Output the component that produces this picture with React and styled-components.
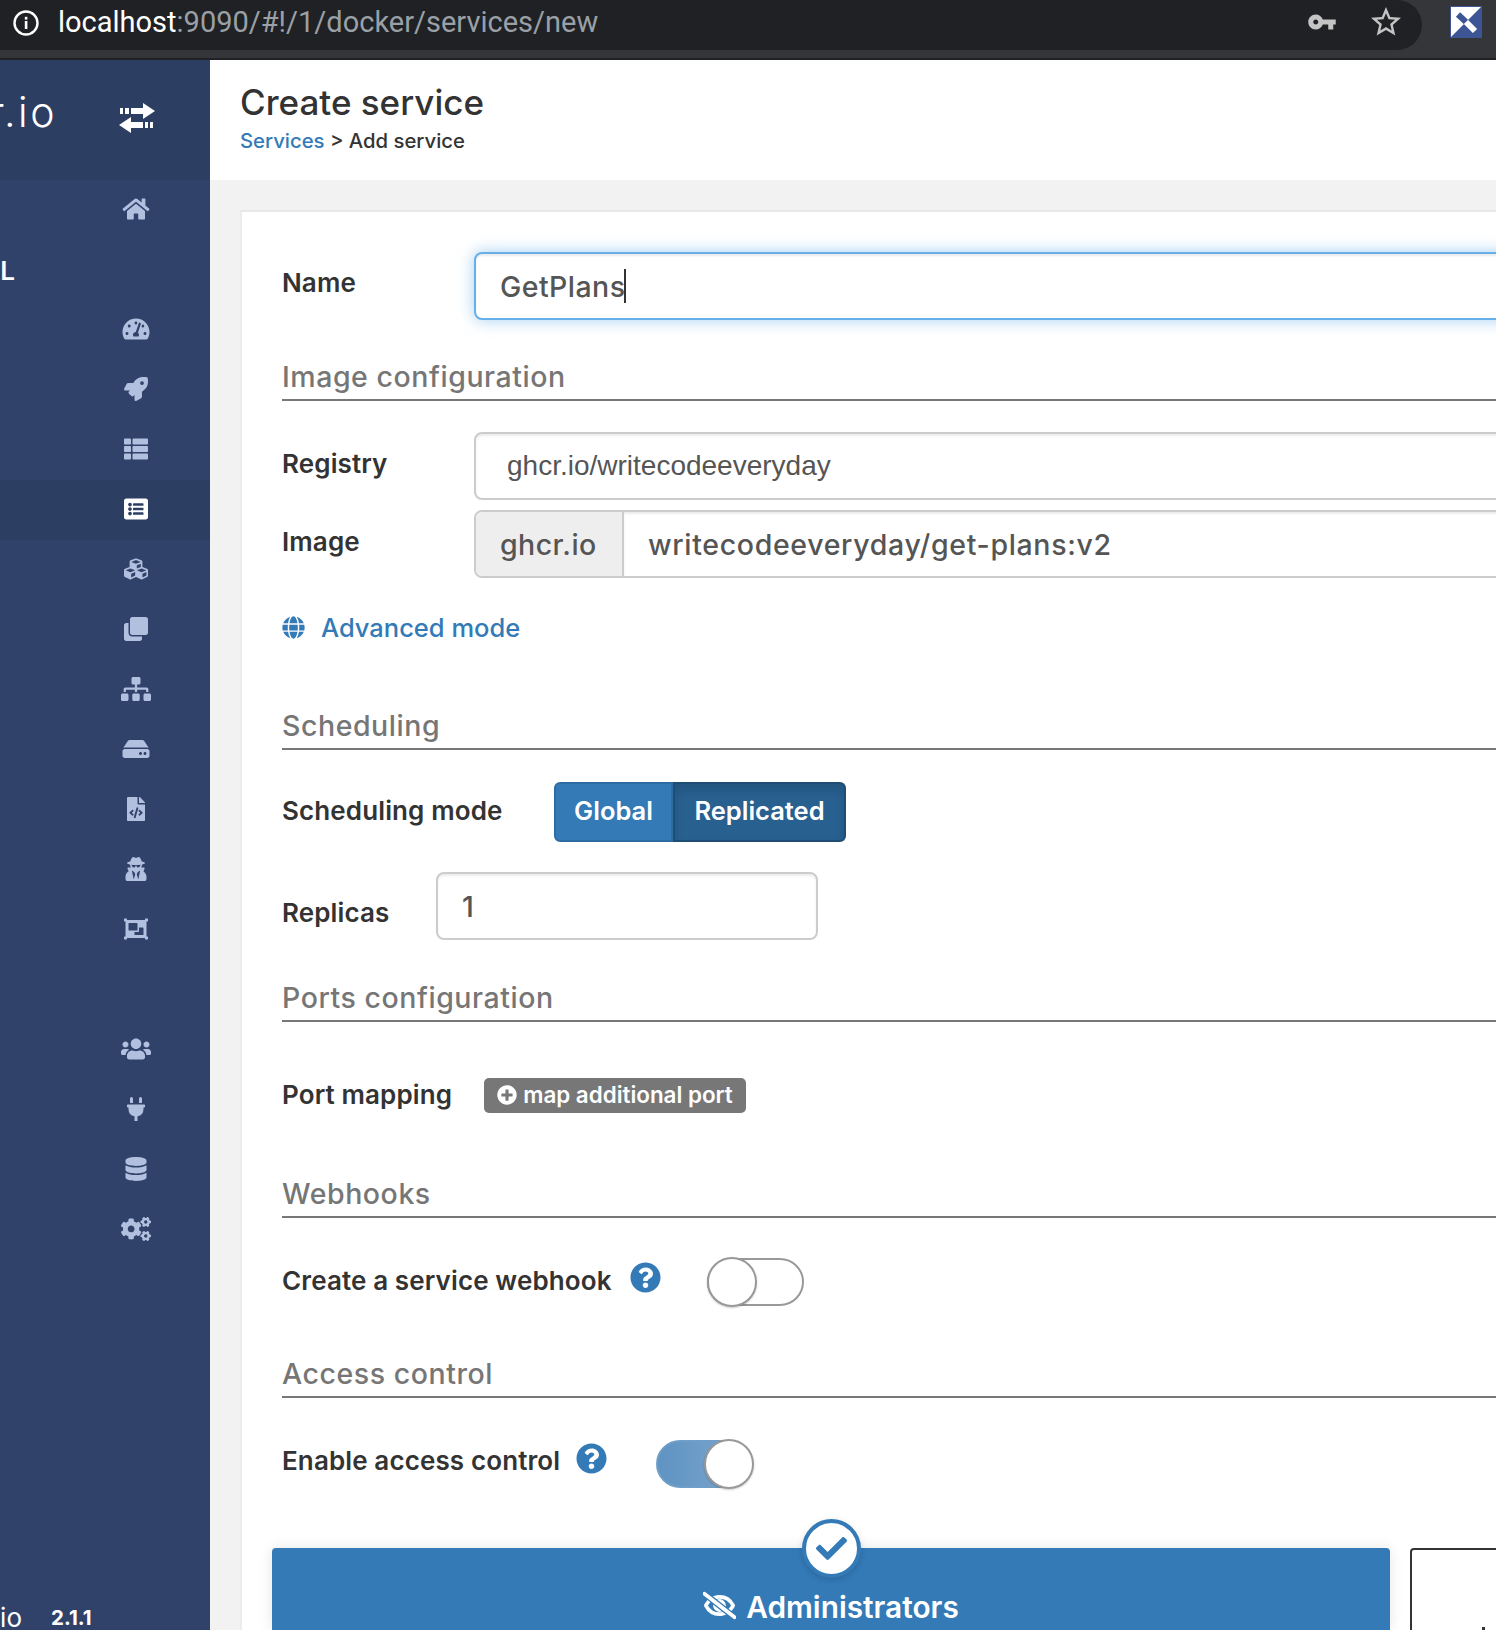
import React from "react";
import styled, { createGlobalStyle } from "styled-components";
import {
  FaHome,
  FaTachometerAlt,
  FaRocket,
  FaThList,
  FaListAlt,
  FaCubes,
  FaClone,
  FaSitemap,
  FaHdd,
  FaFileCode,
  FaUserSecret,
  FaObjectGroup,
  FaUsers,
  FaPlug,
  FaDatabase,
  FaCogs,
  FaGlobe,
  FaQuestionCircle,
  FaPlusCircle,
  FaCheck,
  FaRegEyeSlash,
} from "react-icons/fa";

const GlobalStyle = createGlobalStyle`
  html, body {
    margin: 0;
    padding: 0;
    background: #fff;
  }
  * {
    box-sizing: border-box;
  }
`;

const fontStack = `Inter, "Noto Sans", sans-serif`;

const Page = styled.div`
  width: 1496px;
  height: 1630px;
  overflow: hidden;
  display: flex;
  flex-direction: column;
  font-family: ${fontStack};
  color: #333;
`;

const BrowserBar = styled.div`
  flex: none;
  height: 60px;
  background: #35363a;
  border-bottom: 2px solid #202124;
  display: flex;
  align-items: flex-start;
`;

const UrlPill = styled.div`
  width: 1422px;
  height: 50px;
  background: #202124;
  border-radius: 0 25px 25px 0;
  display: flex;
  align-items: center;
  padding: 0 18px 4px 13px;
  font-family: Roboto, sans-serif;
  font-size: 29px;
`;

const UrlText = styled.div`
  margin: -2px 0 0 19px;
  flex: 1;
  color: #9aa0a6;
`;

const UrlHost = styled.span`
  color: #fff;
`;

const ChromeIcon = styled.svg`
  flex: none;
  fill: #c4c4c4;
  margin: -2px 0 0 ${(p) => p.$left || 0}px;
`;

const ExtensionSlot = styled.div`
  width: 32px;
  height: 32px;
  margin: 6px 0 0 28px;
`;

const Main = styled.div`
  flex: 1;
  display: flex;
  min-height: 0;
`;

const Sidebar = styled.aside`
  flex: none;
  width: 210px;
  background: #30426a;
  color: #fff;
  display: flex;
  flex-direction: column;
`;

const BrandRow = styled.div`
  flex: none;
  height: 120px;
  background: #2d3e63;
  display: flex;
  align-items: center;
`;

const Clip = styled.div`
  flex: none;
  width: ${(p) => p.$width}px;
  overflow: hidden;
  display: flex;
  justify-content: flex-end;
  white-space: nowrap;
`;

const BrandClip = styled(Clip)`
  margin-top: -16px;
`;

const BrandText = styled.span`
  font-size: 41px;
  font-weight: 300;
  letter-spacing: 2.5px;
  color: #fff;
`;

const ToggleIcon = styled.svg`
  width: 36px;
  height: 32px;
  margin: -4px 0 0 62px;
  fill: #fff;
`;

const NavItem = styled.div`
  flex: none;
  height: 60px;
  padding-left: ${(p) => (p.$label ? 0 : 118)}px;
  display: flex;
  align-items: center;
  background: ${(p) => (p.$active ? "#2d3e63" : "transparent")};
  color: ${(p) => (p.$active ? "#fff" : "#b1c0df")};
`;

const NavIcon = styled.span`
  width: 36px;
  margin-top: -2px;
  display: flex;
  justify-content: center;

  svg {
    width: 36px;
    height: 24px;
  }
`;

const NavLabel = styled.span`
  font-size: 26px;
  font-weight: 600;
  color: #fff;
`;

const SidebarFooter = styled.div`
  margin-top: auto;
  height: 26px;
  display: flex;
  align-items: center;
  font-size: 26px;
`;

const FooterVersion = styled.span`
  margin-left: 29px;
  font-size: 20.5px;
  font-weight: 700;
`;

const Content = styled.main`
  flex: 1;
  min-width: 0;
  background: #f2f2f2;
  display: flex;
  flex-direction: column;
`;

const Header = styled.header`
  flex: none;
  height: 120px;
  background: #fff;
  padding: 16px 0 0 30px;
`;

const Title = styled.h1`
  margin: 0;
  font-size: 35px;
  line-height: 52px;
  font-weight: 500;
`;

const Crumbs = styled.div`
  font-size: 20.3px;
  line-height: 28px;
  margin-top: -1px;
  font-weight: 500;
`;

const Link = styled.span`
  color: #337ab7;
`;

const Card = styled.section`
  flex: 1;
  margin: 30px 0 0 30px;
  background: #fff;
  border-top: 2px solid #e7e7e7;
  border-left: 2px solid #ececec;
  padding: 0 0 0 40px;
  overflow: hidden;
`;

const Row = styled.div`
  display: flex;
  align-items: center;
  height: ${(p) => p.$height}px;
  margin-top: ${(p) => p.$top || 0}px;
`;

const Label = styled.label`
  width: ${(p) => p.$width}px;
  margin-top: ${(p) => p.$shift || 0}px;
  flex: none;
  font-size: 26px;
  font-weight: 600;
  color: #333;
  letter-spacing: 0.12px;
  white-space: nowrap;
`;

const Input = styled.div`
  flex: none;
  width: ${(p) => (p.$width ? `${p.$width}px` : "1100px")};
  height: 68px;
  display: flex;
  align-items: center;
  padding-left: ${(p) => p.$pad || 24}px;
  background: #fff;
  border: 2px solid ${(p) => (p.$focus ? "#66afe9" : "#ccc")};
  border-radius: 8px;
  box-shadow: ${(p) =>
    p.$focus
      ? "inset 0 2px 2px rgba(0,0,0,.075), 0 0 16px rgba(102,175,233,.6)"
      : "inset 0 2px 2px rgba(0,0,0,.075)"};
  font-size: 28.5px;
  font-weight: 500;
  letter-spacing: 0.45px;
  color: #555;
`;

const Caret = styled.span`
  width: 2px;
  height: 34px;
  margin-left: -2px;
  background: #333;
`;

const RegistryValue = styled.span`
  font-family: "Liberation Sans", Arial, sans-serif;
  font-size: 28px;
  font-weight: 400;
  letter-spacing: 0;
`;

const InputGroup = styled.div`
  flex: none;
  width: 1100px;
  height: 68px;
  display: flex;
  border: 2px solid #ccc;
  border-radius: 8px;
  font-size: 28.5px;
  font-weight: 500;
  color: #555;
  overflow: hidden;
`;

const Addon = styled.div`
  flex: none;
  width: 148px;
  background: #eee;
  border-right: 2px solid #ccc;
  display: flex;
  align-items: center;
  padding-left: 24px;
  letter-spacing: 0.45px;
`;

const GroupValue = styled.div`
  flex: 1;
  display: flex;
  align-items: center;
  padding-left: 24px;
  letter-spacing: 0.66px;
  box-shadow: inset 0 2px 2px rgba(0, 0, 0, 0.075);
`;

const SectionTitle = styled.div`
  height: 46px;
  margin-top: ${(p) => p.$top}px;
  border-bottom: 2px solid #777;
  font-size: 28.5px;
  line-height: 44px;
  font-weight: 500;
  letter-spacing: 0.55px;
  color: #767676;
`;

const AdvancedLink = styled.a`
  display: flex;
  align-items: center;
  gap: 16px;
  color: #337ab7;
  font-size: 25.5px;
  font-weight: 500;
`;

const ButtonGroup = styled.div`
  display: flex;
  height: 60px;
`;

const ModeButton = styled.div`
  width: ${(p) => p.$width}px;
  padding-bottom: 3px;
  display: flex;
  align-items: center;
  justify-content: center;
  font-size: 25.5px;
  font-weight: 600;
  color: #fff;
  background: ${(p) => (p.$active ? "#286090" : "#337ab7")};
  border: 2px solid ${(p) => (p.$active ? "#204d74" : "#2e6da4")};
  border-radius: ${(p) => (p.$active ? "0 6px 6px 0" : "6px 0 0 6px")};
  box-shadow: ${(p) => (p.$active ? "inset 0 6px 10px rgba(0,0,0,.125)" : "none")};
`;

const PortBadge = styled.div`
  width: 262px;
  height: 35px;
  padding-bottom: 1px;
  display: flex;
  align-items: center;
  justify-content: center;
  gap: 6px;
  background: #777;
  border-radius: 5px;
  color: #fff;
  font-size: 22.4px;
  font-weight: 600;
  white-space: nowrap;
`;

const HelpIcon = styled.span`
  display: flex;
  font-size: 31px;
  color: #337ab7;
  margin-top: ${(p) => p.$shift}px;
`;

const Switch = styled.div`
  position: relative;
  flex: none;
  width: 97px;
  height: 48px;
  margin-left: ${(p) => p.$left}px;
  border-radius: 24px;
  background: ${(p) => (p.$on ? "linear-gradient(90deg, #5f93c2, #7fa8cf)" : "#fff")};
  border: 2px solid ${(p) => (p.$on ? "#6f9fc9" : "#999")};
`;

const Knob = styled.span`
  position: absolute;
  top: -3px;
  left: ${(p) => (p.$on ? "46px" : "-2px")};
  width: 50px;
  height: 50px;
  border-radius: 50%;
  background: #fff;
  border: 2px solid #999;
  box-shadow: 0 1px 2px rgba(0, 0, 0, 0.2);
`;

const AccessRow = styled.div`
  display: flex;
  gap: 20px;
  height: 82px;
  margin: 59px 0 0 -10px;
`;

const AccessOption = styled.div`
  position: relative;
  flex: none;
  width: 1118px;
  height: 82px;
  background: #337ab7;
  border-radius: 4px 4px 0 0;
  box-shadow: 0 0 14px rgba(0, 0, 0, 0.1);
  color: #fff;
  display: flex;
  align-items: flex-start;
  justify-content: center;
  gap: 10px;
  padding-top: 41px;
  font-size: 29.8px;
  font-weight: 600;
`;

const AccessOptionBlank = styled.div`
  flex: none;
  width: 120px;
  height: 82px;
  background: #fff;
  border: 2px solid #333;
  border-bottom: 0;
  border-radius: 4px 4px 0 0;
  padding: 77px 0 0 70px;
`;

const BlankMark = styled.span`
  display: block;
  width: 3px;
  height: 4px;
  background: #333;
`;

const CheckBadge = styled.span`
  position: absolute;
  top: -29px;
  left: 530px;
  width: 59px;
  height: 59px;
  border-radius: 50%;
  background: #fff;
  border: 4px solid #337ab7;
  box-shadow: 0 2px 6px rgba(0, 0, 0, 0.15);
  color: #337ab7;
  display: flex;
  align-items: center;
  justify-content: center;
  font-size: 31px;
`;

const navTop = [FaTachometerAlt, FaRocket, FaThList, FaListAlt, FaCubes, FaClone, FaSitemap, FaHdd, FaFileCode, FaUserSecret, FaObjectGroup];
const navBottom = [FaUsers, FaPlug, FaDatabase, FaCogs];

function renderNav(Icon, index, active) {
  return (
    <NavItem key={index} $active={active}>
      <NavIcon>
        <Icon />
      </NavIcon>
    </NavItem>
  );
}

function InfoIcon() {
  return (
    <svg width="26" height="26" viewBox="0 0 26 26" fill="none">
      <circle cx="13" cy="13" r="11.5" stroke="#fff" strokeWidth="2.4" />
      <rect x="11.8" y="11" width="2.6" height="8" fill="#fff" />
      <rect x="11.8" y="6.8" width="2.6" height="2.8" fill="#fff" />
    </svg>
  );
}

function PortainerBadge() {
  return (
    <svg width="32" height="32" viewBox="0 0 32 32">
      <rect width="32" height="32" fill="#3d5594" />
      <polygon points="1,1 31,1 1,31" fill="#fff" />
      <line x1="8" y1="8.5" x2="16" y2="16" stroke="#3d5594" strokeWidth="6" />
      <line x1="16" y1="16" x2="25" y2="25" stroke="#fff" strokeWidth="6" />
    </svg>
  );
}

export default function App() {
  return (
    <Page>
      <GlobalStyle />
      <BrowserBar>
        <UrlPill>
          <InfoIcon />
          <UrlText>
            <UrlHost>localhost</UrlHost>:9090/#!/1/docker/services/new
          </UrlText>
          <ChromeIcon width="30" height="30" viewBox="0 0 24 24">
            <path d="M12.65 10C11.83 7.67 9.61 6 7 6c-3.31 0-6 2.69-6 6s2.69 6 6 6c2.61 0 4.83-1.67 5.65-4H17v4h4v-4h2v-4H12.65zM7 14c-1.1 0-2-.9-2-2s.9-2 2-2 2 .9 2 2-.9 2-2 2z" />
          </ChromeIcon>
          <ChromeIcon $left={31} width="36" height="36" viewBox="0 0 24 24">
            <path d="M22 9.24l-7.19-.62L12 2 9.19 8.63 2 9.24l5.46 4.73L5.82 21 12 17.27 18.18 21l-1.63-7.03L22 9.24zM12 15.4l-3.76 2.27 1-4.28-3.32-2.88 4.38-.38L12 6.1l1.71 4.04 4.38.38-3.32 2.88 1 4.28L12 15.4z" />
          </ChromeIcon>
        </UrlPill>
        <ExtensionSlot>
          <PortainerBadge />
        </ExtensionSlot>
      </BrowserBar>
      <Main>
        <Sidebar>
          <BrandRow>
            <BrandClip $width={57}>
              <BrandText>portainer.io</BrandText>
            </BrandClip>
            <ToggleIcon viewBox="0 0 36 32">
              <path d="M24 1l12 8-12 8v-5H12V6h12z" />
              <rect x="1" y="6" width="3" height="6" />
              <rect x="6" y="6" width="4" height="6" />
              <path d="M12 15l-12 8 12 8v-5h12v-6H12z" />
              <rect x="26" y="20" width="3" height="6" />
              <rect x="31" y="20" width="3" height="6" />
            </ToggleIcon>
          </BrandRow>
          {renderNav(FaHome, "home", false)}
          <NavItem $label>
            <Clip $width={15}>
              <NavLabel>LOCAL</NavLabel>
            </Clip>
          </NavItem>
          {navTop.map((Icon, i) => renderNav(Icon, `top-${i}`, Icon === FaListAlt))}
          <NavItem />
          {navBottom.map((Icon, i) => renderNav(Icon, `bottom-${i}`, false))}
          <SidebarFooter>
            <Clip $width={22}>portainer.io</Clip>
            <FooterVersion>2.1.1</FooterVersion>
          </SidebarFooter>
        </Sidebar>
        <Content>
          <Header>
            <Title>Create service</Title>
            <Crumbs>
              <Link>Services</Link> &gt; Add service
            </Crumbs>
          </Header>
          <Card>
            <Row $height={68} $top={40}>
              <Label $width={192} $shift={-8}>
                Name
              </Label>
              <Input $focus>
                GetPlans
                <Caret />
              </Input>
            </Row>
            <SectionTitle $top={35}>Image configuration</SectionTitle>
            <Row $height={68} $top={31}>
              <Label $width={192} $shift={-6}>
                Registry
              </Label>
              <Input $pad={31}>
                <RegistryValue>ghcr.io/writecodeeveryday</RegistryValue>
              </Input>
            </Row>
            <Row $height={68} $top={10}>
              <Label $width={192} $shift={-5}>
                Image
              </Label>
              <InputGroup>
                <Addon>ghcr.io</Addon>
                <GroupValue>writecodeeveryday/get-plans:v2</GroupValue>
              </InputGroup>
            </Row>
            <Row $height={40} $top={29}>
              <AdvancedLink>
                <FaGlobe size={23} />
                Advanced mode
              </AdvancedLink>
            </Row>
            <SectionTitle $top={57}>Scheduling</SectionTitle>
            <Row $height={60} $top={32}>
              <Label $width={272} $shift={-4}>
                Scheduling mode
              </Label>
              <ButtonGroup>
                <ModeButton $width={119}>Global</ModeButton>
                <ModeButton $width={173} $active>
                  Replicated
                </ModeButton>
              </ButtonGroup>
            </Row>
            <Row $height={68} $top={30}>
              <Label $width={154} $shift={12}>
                Replicas
              </Label>
              <Input $width={382} $pad={24}>
                1
              </Input>
            </Row>
            <SectionTitle $top={36}>Ports configuration</SectionTitle>
            <Row $height={36} $top={55}>
              <Label $width={202} $shift={-2}>
                Port mapping
              </Label>
              <PortBadge>
                <FaPlusCircle size={20} />
                map additional port
              </PortBadge>
            </Row>
            <SectionTitle $top={59}>Webhooks</SectionTitle>
            <Row $height={50} $top={39}>
              <Label $width={348} $shift={-4}>
                Create a service webhook
              </Label>
              <HelpIcon $shift={-9}>
                <FaQuestionCircle />
              </HelpIcon>
              <Switch $left={46}>
                <Knob />
              </Switch>
            </Row>
            <SectionTitle $top={45}>Access control</SectionTitle>
            <Row $height={50} $top={41}>
              <Label $width={294} $shift={-8}>
                Enable access control
              </Label>
              <HelpIcon $shift={-11}>
                <FaQuestionCircle />
              </HelpIcon>
              <Switch $left={49} $on>
                <Knob $on />
              </Switch>
            </Row>
            <AccessRow>
              <AccessOption>
                <CheckBadge>
                  <FaCheck />
                </CheckBadge>
                <FaRegEyeSlash size={33} strokeWidth={24} />
                Administrators
              </AccessOption>
              <AccessOptionBlank>
                <BlankMark />
              </AccessOptionBlank>
            </AccessRow>
          </Card>
        </Content>
      </Main>
    </Page>
  );
}
